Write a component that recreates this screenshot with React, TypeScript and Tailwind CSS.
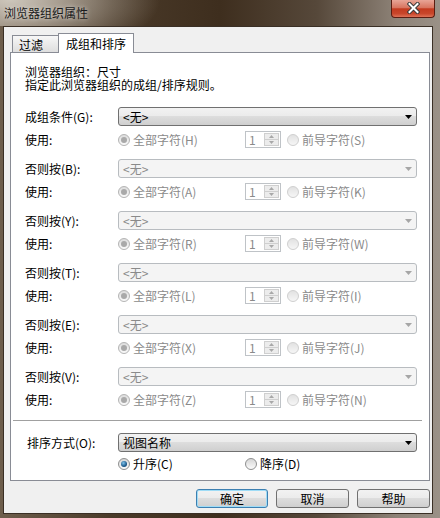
import type { ReactNode } from 'react'

const groups = [
  { label: '成组条件(G):', all: '全部字符(H)', lead: '前导字符(S)', enabled: true },
  { label: '否则按(B):', all: '全部字符(A)', lead: '前导字符(K)', enabled: false },
  { label: '否则按(Y):', all: '全部字符(R)', lead: '前导字符(W)', enabled: false },
  { label: '否则按(T):', all: '全部字符(L)', lead: '前导字符(I)', enabled: false },
  { label: '否则按(E):', all: '全部字符(X)', lead: '前导字符(J)', enabled: false },
  { label: '否则按(V):', all: '全部字符(Z)', lead: '前导字符(N)', enabled: false },
]

const Arrow = ({ color }: { color: string }) => (
  <svg width="7" height="4" viewBox="0 0 7 4">
    <path d="M0 0h7L3.5 4z" fill={color} />
  </svg>
)

function Select({ value, enabled }: { value: string; enabled: boolean }) {
  return (
    <div
      className={`flex h-[19px] flex-1 items-center justify-between rounded-[3px] border pl-[4px] pr-[4px] ${
        enabled
          ? 'border-[#707070] bg-[linear-gradient(180deg,#f2f2f2_0%,#ebebeb_50%,#dddddd_50%,#cfcfcf_100%)] text-black'
          : 'border-[#b8bcc0] bg-[#f4f4f4] text-[#8a8a8a]'
      }`}
    >
      <span className="leading-[13px]">{value}</span>
      <Arrow color={enabled ? '#000000' : '#a6a6a6'} />
    </div>
  )
}

function Radio({ checked, enabled }: { checked: boolean; enabled: boolean }) {
  if (!enabled) {
    return (
      <span
        className={`flex h-[12px] w-[12px] shrink-0 items-center justify-center rounded-full border ${
          checked ? 'border-[#b4b4b4] bg-[linear-gradient(180deg,#dcdcdc,#fafafa)]' : 'border-[#cfcfcf] bg-[linear-gradient(180deg,#e2e2e2,#f6f6f6)]'
        }`}
      >
        {checked && <span className="h-[6px] w-[6px] rounded-full bg-[#a9a9a9]" />}
      </span>
    )
  }
  return (
    <span className="flex h-[12px] w-[12px] shrink-0 items-center justify-center rounded-full border border-[#8e8f8f] bg-[linear-gradient(180deg,#d6d6d6,#fbfbfb)]">
      {checked && <span className="h-[6px] w-[6px] rounded-full bg-[radial-gradient(circle_at_40%_35%,#7fc3ea,#1d5a8c_60%,#0f3a63)]" />}
    </span>
  )
}

const RadioLabel = ({ checked, enabled, children }: { checked: boolean; enabled: boolean; children: ReactNode }) => (
  <span className="flex items-center gap-[3px]">
    <Radio checked={checked} enabled={enabled} />
    <span className={`leading-[13px] ${enabled ? 'text-black' : 'text-[#8a8a8a]'}`}>{children}</span>
  </span>
)

function Spinner() {
  return (
    <div className="flex h-[17px] w-[36px] border border-[#bfc3c7] bg-white">
      <span className="flex-1 pl-[3px] leading-[15px] text-[#8a8a8a]">1</span>
      <div className="my-[1px] mr-[1px] flex w-[15px] flex-col">
        <div className="flex flex-1 items-center justify-center border border-[#cfcfcf] bg-[#ececec]">
          <svg width="5" height="3" viewBox="0 0 5 3">
            <path d="M0 3h5L2.5 0z" fill="#a8a8a8" />
          </svg>
        </div>
        <div className="-mt-px flex flex-1 items-center justify-center border border-[#cfcfcf] bg-[#ececec]">
          <svg width="5" height="3" viewBox="0 0 5 3">
            <path d="M0 0h5L2.5 3z" fill="#a8a8a8" />
          </svg>
        </div>
      </div>
    </div>
  )
}

function Button({ children, primary, width }: { children: ReactNode; primary?: boolean; width: string }) {
  return (
    <button
      type="button"
      className={`flex h-[19px] items-center justify-center rounded-[3px] border leading-[13px] text-black ${width} ${
        primary
          ? 'border-[#3c7fb1] bg-[linear-gradient(180deg,#f2f2f2_0%,#ebebeb_50%,#dddddd_50%,#cfcfcf_100%)] shadow-[inset_0_0_0_1px_#9fdcf6]'
          : 'border-[#707070] bg-[linear-gradient(180deg,#f2f2f2_0%,#ebebeb_50%,#dddddd_50%,#cfcfcf_100%)]'
      }`}
    >
      {children}
    </button>
  )
}

export default function App() {
  return (
    <div className="flex h-[518px] w-[440px] flex-col bg-[linear-gradient(90deg,#6e5e4c_0%,#4a3a29_25%,#3e2e1e_50%,#56483a_72%,#8d8277_90%,#9a9187_100%)] font-['Noto_Sans_CJK_SC','Noto_Sans',sans-serif] text-[12px]">
      {/* title bar */}
      <div className="flex h-[26px] shrink-0 items-start justify-between bg-[radial-gradient(ellipse_150px_60px_at_10px_0px,#cdc6bb,transparent)]">
        <span className="pl-[4px] pt-[6px] leading-[13px] text-[#1a1a1a] [text-shadow:0_0_5px_rgba(255,255,255,0.7)]">
          浏览器组织属性
        </span>
        <div className="mr-[5px] flex h-[18px] w-[44px] items-center justify-center rounded-b-[4px] border border-t-0 border-[#5a1d12] bg-[linear-gradient(180deg,#e8a597_0%,#d87560_45%,#c33a1f_52%,#c8462b_80%,#df7257_100%)]">
          <svg width="13" height="12" viewBox="0 0 13 12" className="-mt-[2px]">
            <path d="M2.5 2l8 8M10.5 2l-8 8" stroke="#3a3a3a" strokeWidth="4" strokeLinecap="square" />
            <path d="M2.5 2l8 8M10.5 2l-8 8" stroke="#ffffff" strokeWidth="2" strokeLinecap="square" />
          </svg>
        </div>
      </div>

      {/* client area */}
      <div className="mb-[4px] ml-[3px] mr-[7px] flex flex-1 flex-col border border-[#3a2f25] bg-[#f0f0f0] pl-[6px] pr-[2px] pt-[6px]">
        <div className="-mb-px flex h-[20px] items-end pl-[2px]">
          <div className="flex h-[18px] w-[48px] items-center border border-[#898c95] bg-[linear-gradient(180deg,#f7f7f7,#dedede)] pl-[6px] pt-[1px] leading-[13px]">
            过滤
          </div>
          <div className="relative z-10 -ml-[2px] flex h-[20px] w-[76px] items-center border border-b-0 border-[#898c95] bg-white pl-[7px] leading-[13px]">
            成组和排序
          </div>
        </div>

        <div className="flex flex-col border border-[#898c95] bg-white pb-[8px] pt-[12px]">
          <div className="pl-[14px] leading-[13px]">
            <div>浏览器组织：尺寸</div>
            <div>指定此浏览器组织的成组/排序规则。</div>
          </div>

          <div className="mt-[16px] flex flex-col gap-[11px] pl-[14px] pr-[12px]">
            {groups.map((g) => (
              <div key={g.label} className="flex flex-col gap-[5px]">
                <div className="flex items-center">
                  <span className="w-[93px] leading-[13px]">{g.label}</span>
                  <Select value="<无>" enabled={g.enabled} />
                </div>
                <div className="flex h-[17px] items-center">
                  <span className="w-[93px] leading-[13px]">使用:</span>
                  <div className="w-[127px]">
                    <RadioLabel checked enabled={false}>{g.all}</RadioLabel>
                  </div>
                  <Spinner />
                  <div className="ml-[6px]">
                    <RadioLabel checked={false} enabled={false}>{g.lead}</RadioLabel>
                  </div>
                </div>
              </div>
            ))}
          </div>

          <div className="ml-[2px] mr-[7px] mt-[12px] h-px bg-[#a0a0a0]" />

          <div className="mt-[12px] flex items-center pl-[16px] pr-[12px]">
            <span className="w-[91px] leading-[13px]">排序方式(O):</span>
            <Select value="视图名称" enabled />
          </div>
          <div className="mt-[3px] flex h-[17px] items-center pl-[107px]">
            <div className="w-[127px]">
              <RadioLabel checked enabled>升序(C)</RadioLabel>
            </div>
            <RadioLabel checked={false} enabled>降序(D)</RadioLabel>
          </div>
        </div>

        <div className="mt-[8px] flex justify-end gap-[8px]">
          <Button primary width="w-[72px]">确定</Button>
          <Button width="w-[73px]">取消</Button>
          <Button width="w-[73px]">帮助</Button>
        </div>
      </div>
    </div>
  )
}
